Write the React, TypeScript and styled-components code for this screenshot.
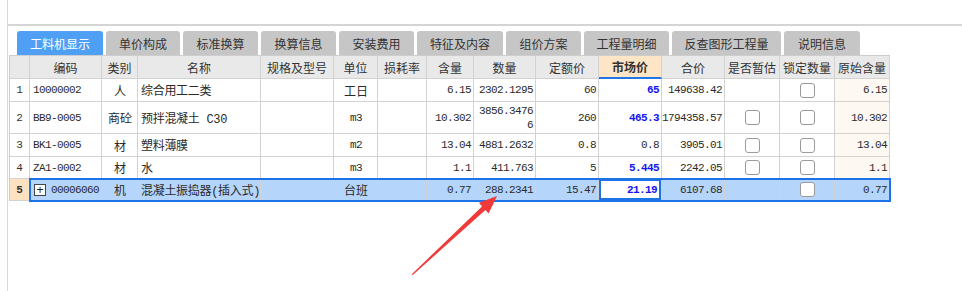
import React from "react";
import styled, { createGlobalStyle, css } from "styled-components";

const GlobalStyle = createGlobalStyle`
  html, body {
    margin: 0;
    padding: 0;
    background: #ffffff;
  }
  body {
    font-family: "Noto Sans CJK SC", "Liberation Sans", sans-serif;
    font-size: 12px;
    color: #222222;
  }
`;

type Align = "left" | "center" | "right";

interface IColumn {
  title: string;
  width: number;
}

const columns: IColumn[] = [
  { title: "", width: 20 },
  { title: "编码", width: 72 },
  { title: "类别", width: 36 },
  { title: "名称", width: 123 },
  { title: "规格及型号", width: 73 },
  { title: "单位", width: 44 },
  { title: "损耗率", width: 49 },
  { title: "含量", width: 47 },
  { title: "数量", width: 62 },
  { title: "定额价", width: 63 },
  { title: "市场价", width: 63 },
  { title: "合价", width: 63 },
  { title: "是否暂估", width: 55 },
  { title: "锁定数量", width: 55 },
  { title: "原始含量", width: 55 },
];

const gridTemplate = columns.map((c) => `${c.width}px`).join(" ");

const tabs = [
  { label: "工料机显示", width: 86 },
  { label: "单价构成", width: 74 },
  { label: "标准换算", width: 75 },
  { label: "换算信息", width: 75 },
  { label: "安装费用", width: 75 },
  { label: "特征及内容", width: 86 },
  { label: "组价方案", width: 75 },
  { label: "工程量明细", width: 85 },
  { label: "反查图形工程量", width: 109 },
  { label: "说明信息", width: 76 },
];

interface IRow {
  code: string;
  type: string;
  name: string;
  unit: string;
  amount: string;
  quantity: string;
  quotaPrice: string;
  marketPrice: string;
  marketChanged: boolean;
  total: string;
  provisional: boolean;
  locked: boolean;
  original: string;
  height: number;
  expandable?: boolean;
  selected?: boolean;
}

const rows: IRow[] = [
  {
    code: "10000002",
    type: "人",
    name: "综合用工二类",
    unit: "工日",
    amount: "6.15",
    quantity: "2302.1295",
    quotaPrice: "60",
    marketPrice: "65",
    marketChanged: true,
    total: "149638.42",
    provisional: false,
    locked: true,
    original: "6.15",
    height: 23,
  },
  {
    code: "BB9-0005",
    type: "商砼",
    name: "预拌混凝土 C30",
    unit: "m3",
    amount: "10.302",
    quantity: "3856.34766",
    quotaPrice: "260",
    marketPrice: "465.3",
    marketChanged: true,
    total: "1794358.57",
    provisional: true,
    locked: true,
    original: "10.302",
    height: 32,
  },
  {
    code: "BK1-0005",
    type: "材",
    name: "塑料薄膜",
    unit: "m2",
    amount: "13.04",
    quantity: "4881.2632",
    quotaPrice: "0.8",
    marketPrice: "0.8",
    marketChanged: false,
    total: "3905.01",
    provisional: true,
    locked: true,
    original: "13.04",
    height: 23,
  },
  {
    code: "ZA1-0002",
    type: "材",
    name: "水",
    unit: "m3",
    amount: "1.1",
    quantity: "411.763",
    quotaPrice: "5",
    marketPrice: "5.445",
    marketChanged: true,
    total: "2242.05",
    provisional: true,
    locked: true,
    original: "1.1",
    height: 22,
  },
  {
    code: "00006060",
    type: "机",
    name: "混凝土振捣器(插入式)",
    unit: "台班",
    amount: "0.77",
    quantity: "288.2341",
    quotaPrice: "15.47",
    marketPrice: "21.19",
    marketChanged: true,
    total: "6107.68",
    provisional: false,
    locked: true,
    original: "0.77",
    height: 22,
    expandable: true,
    selected: true,
  },
];

const isAscii = (s: string) => !/[^\x00-\x7f]/.test(s);

const App: React.FC = () => {
  return (
    <>
      <GlobalStyle />
      <Page>
        <Frame>
          <TopArea />
          <TabStrip>
            {tabs.map((tab, i) => (
              <Tab key={tab.label} $width={tab.width} $active={i === 0}>
                {tab.label}
              </Tab>
            ))}
          </TabStrip>

          <Table>
            <HeaderRow>
              {columns.map((col, i) => (
                <HeaderCell key={i} $highlight={col.title === "市场价"}>
                  {col.title}
                </HeaderCell>
              ))}
            </HeaderRow>

            {rows.map((row, index) => (
              <Row key={row.code} $height={row.height} $selected={row.selected}>
                <NumberCell $selected={row.selected}>{index + 1}</NumberCell>
                <Cell $align="left" $mono $selected={row.selected}>
                  {row.expandable && <Expander>+</Expander>}
                  {row.code}
                </Cell>
                <Cell $align="center" $selected={row.selected}>
                  {row.type}
                </Cell>
                <Cell $align="left" $selected={row.selected}>
                  <Name>{row.name}</Name>
                </Cell>
                <Cell $align="left" $selected={row.selected} />
                <Cell $align="center" $mono={isAscii(row.unit)} $selected={row.selected}>
                  {row.unit}
                </Cell>
                <Cell $align="right" $selected={row.selected} />
                <Cell $align="right" $mono $selected={row.selected}>
                  {row.amount}
                </Cell>
                <Cell $align="right" $mono $selected={row.selected}>
                  {row.quantity.length > 9 ? (
                    <Wrapped>
                      {row.quantity.slice(0, 9)}
                      <br />
                      {row.quantity.slice(9)}
                    </Wrapped>
                  ) : (
                    row.quantity
                  )}
                </Cell>
                <Cell $align="right" $mono $selected={row.selected}>
                  {row.quotaPrice}
                </Cell>
                <Cell
                  $align="right"
                  $mono
                  $selected={row.selected}
                  $current={row.selected}
                  $strong={row.marketChanged}
                >
                  {row.marketPrice}
                </Cell>
                <Cell $align="right" $mono $selected={row.selected}>
                  {row.total}
                </Cell>
                <Cell $align="center" $selected={row.selected}>
                  {row.provisional && <Checkbox />}
                </Cell>
                <Cell $align="center" $selected={row.selected}>
                  {row.locked && <Checkbox />}
                </Cell>
                <Cell $align="right" $mono $selected={row.selected} $cream>
                  {row.original}
                </Cell>
              </Row>
            ))}
          </Table>
        </Frame>

        <ArrowLayer width="962" height="291" viewBox="0 0 962 291">
          <polygon
            points="411.5,274.5 482,206.4 479,202.8 497,196 488.6,213.4 485.4,210 412.8,275"
            fill="#f03a3a"
          />
        </ArrowLayer>
      </Page>
    </>
  );
};
export default App;

const monoText = css`
  font-family: "Liberation Mono", "DejaVu Sans Mono", monospace;
  font-size: 11px;
  letter-spacing: -0.6px;
`;

const Page = styled.div`
  position: relative;
  width: 962px;
  height: 291px;
  overflow: hidden;
`;
const Frame = styled.div`
  margin-left: 7px;
  height: 291px;
  border-left: 1px solid #dadada;
  box-sizing: border-box;
  display: flex;
  flex-direction: column;
`;
const TopArea = styled.div`
  height: 24px;
  border-bottom: 2px solid #d5d5d5;
  flex: none;
`;
const TabStrip = styled.div`
  display: flex;
  gap: 3px;
  margin-top: 5px;
  padding-left: 9px;
  height: 24px;
  flex: none;
`;
const Tab = styled.div<{ $width: number; $active?: boolean }>`
  width: ${(p) => p.$width}px;
  height: 24px;
  display: flex;
  align-items: center;
  justify-content: center;
  border-radius: 3px 3px 0 0;
  font-size: 12px;
  color: ${(p) => (p.$active ? "#ffffff" : "#333333")};
  background: ${(p) => (p.$active ? "#4fa0f5" : "#c6c6c6")};
`;
const Table = styled.div`
  margin-left: 1px;
  width: 881px;
  border-left: 1px solid #cdcdcd;
  border-top: 1px solid #cdcdcd;
  box-sizing: border-box;
`;
const HeaderRow = styled.div`
  display: grid;
  grid-template-columns: ${gridTemplate};
  height: 23px;
`;
const HeaderCell = styled.div<{ $highlight?: boolean }>`
  display: flex;
  align-items: center;
  justify-content: center;
  box-sizing: border-box;
  border-right: 1px solid #d2d2d2;
  border-bottom: ${(p) => (p.$highlight ? "2px solid #1f76e9" : "1px solid #d2d2d2")};
  background: ${(p) => (p.$highlight ? "#fde5c6" : "#e9e9e9")};
  font-weight: ${(p) => (p.$highlight ? 700 : 400)};
  color: #333333;
  font-size: 12px;
  white-space: nowrap;
  overflow: hidden;
`;
const Row = styled.div<{ $height: number; $selected?: boolean }>`
  position: relative;
  display: grid;
  grid-template-columns: ${gridTemplate};
  height: ${(p) => p.$height}px;
  ${(p) =>
    p.$selected &&
    css`
      &::after {
        content: "";
        position: absolute;
        left: 19px;
        top: -1px;
        right: -1px;
        bottom: -1px;
        border: 2px solid #1d72e8;
        pointer-events: none;
      }
    `}
`;
const Cell = styled.div<{
  $align: Align;
  $mono?: boolean;
  $selected?: boolean;
  $current?: boolean;
  $strong?: boolean;
  $cream?: boolean;
}>`
  display: flex;
  align-items: center;
  justify-content: ${(p) =>
    p.$align === "left" ? "flex-start" : p.$align === "right" ? "flex-end" : "center"};
  box-sizing: border-box;
  padding: 0 2px 0 3px;
  border-right: 1px solid #d2d2d2;
  border-bottom: 1px solid #d2d2d2;
  white-space: nowrap;
  overflow: hidden;
  color: #2a2a2a;
  font-size: 12px;
  background: ${(p) => (p.$selected ? "#b6d5fa" : p.$cream ? "#fdf8f1" : "#ffffff")};
  ${(p) => p.$mono && monoText}
  ${(p) =>
    p.$strong &&
    css`
      color: #1414f0;
      font-weight: 700;
    `}
  ${(p) =>
    p.$current &&
    css`
      background: #ffffff;
      box-shadow: inset 0 0 0 2px #1d72e8;
      padding-right: 4px;
    `}
`;
const NumberCell = styled.div<{ $selected?: boolean }>`
  display: flex;
  align-items: center;
  justify-content: center;
  box-sizing: border-box;
  border-right: 1px solid #d2d2d2;
  border-bottom: 1px solid #d2d2d2;
  ${monoText}
  letter-spacing: 0;
  color: #333333;
  background: ${(p) => (p.$selected ? "#fde2c2" : "#ffffff")};
  font-weight: ${(p) => (p.$selected ? 700 : 400)};
`;
const Name = styled.span`
  font-family: "Liberation Mono", "Noto Sans CJK SC", monospace;
  font-size: 12px;
  letter-spacing: -0.3px;
`;
const Wrapped = styled.span`
  text-align: right;
  line-height: 14px;
`;
const Expander = styled.span`
  width: 10px;
  height: 10px;
  border: 1px solid #444444;
  background: #ffffff;
  display: inline-flex;
  align-items: center;
  justify-content: center;
  font-family: "Liberation Sans", sans-serif;
  font-size: 12px;
  letter-spacing: 0;
  line-height: 1;
  margin: 0 5px 0 1px;
  color: #222222;
`;
const Checkbox = styled.span`
  width: 13px;
  height: 13px;
  border: 1px solid #9a9a9a;
  border-radius: 3px;
  background: #ffffff;
`;
const ArrowLayer = styled.svg`
  position: absolute;
  left: 0;
  top: 0;
  pointer-events: none;
`;
